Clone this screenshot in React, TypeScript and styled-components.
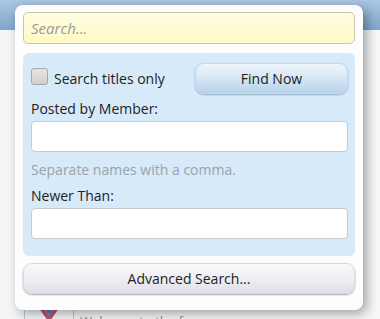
import React from 'react';
import styled, { createGlobalStyle } from 'styled-components';

const GlobalStyle = createGlobalStyle`
    html, body {
        margin: 0;
        padding: 0;
        background: #f4f6f8;
    }
    body {
        font-family: "Open Sans", "Liberation Sans", Arial, sans-serif;
    }
`;

const App = () => {
    return (
        <Page>
            <GlobalStyle />
            <HeaderBar />
            <Content>
                <Sidebar />
                <ThreadRow>
                    <Avatar>
                        <svg width="36" height="20" viewBox="0 0 36 20">
                            <path d="M4 0 L18 20 L32 0" fill="none" stroke="#c0507a" strokeWidth="4" />
                            <path d="M9 0 L18 14 L27 0" fill="none" stroke="#5a7fc0" strokeWidth="3" />
                            <path d="M13 0 L18 8 L23 0" fill="none" stroke="#7ab07a" strokeWidth="3" />
                        </svg>
                    </Avatar>
                    <ThreadTitle>Welcome to the forum</ThreadTitle>
                </ThreadRow>
            </Content>

            <Popup>
                <SearchInput placeholder="Search..." />
                <Options>
                    <TopRow>
                        <CheckLabel>
                            <CheckBox />
                            Search titles only
                        </CheckLabel>
                        <FindButton>Find Now</FindButton>
                    </TopRow>
                    <Label>Posted by Member:</Label>
                    <TextField />
                    <Hint>Separate names with a comma.</Hint>
                    <Label>Newer Than:</Label>
                    <TextField />
                </Options>
                <AdvancedButton>Advanced Search...</AdvancedButton>
            </Popup>
        </Page>
    );
};

export default App;

const Page = styled.div`
    position: relative;
    width: 380px;
    height: 319px;
    overflow: hidden;
    background: #f6f8fa;
`;

const HeaderBar = styled.div`
    height: 30px;
    background: linear-gradient(to bottom, #a9c7e1 0%, #7fa7ca 100%);
`;

const Content = styled.div`
    display: flex;
    height: 289px;
`;

const Sidebar = styled.div`
    width: 24px;
    background: #f3f5f7;
`;

const ThreadRow = styled.div`
    flex: 1;
    display: flex;
    align-items: flex-end;
    gap: 6px;
`;

const Avatar = styled.div`
    width: 50px;
    height: 20px;
    border-left: 1px solid #b8c8d8;
    border-right: 1px solid #b8c8d8;
    display: flex;
    justify-content: center;
    align-items: flex-start;
    box-sizing: border-box;
`;

const ThreadTitle = styled.div`
    font-size: 13px;
    line-height: 16px;
    color: #8090a0;
    margin-bottom: -10px;
`;

const Popup = styled.div`
    position: absolute;
    left: 15px;
    top: 5px;
    width: 348px;
    box-sizing: border-box;
    padding: 7px 8px 12px 8px;
    background: #fdfdfe;
    border-radius: 8px;
    box-shadow: 4px 4px 12px rgba(0, 0, 0, 0.35);
    display: flex;
    flex-direction: column;
`;

const SearchInput = styled.input`
    height: 32px;
    box-sizing: border-box;
    border: 1px solid #c9c6b0;
    border-radius: 5px;
    background: linear-gradient(to bottom, #fffde0 0%, #fefbc6 100%);
    padding: 0 7px;
    font-family: "Open Sans", "Liberation Sans", Arial, sans-serif;
    font-size: 15px;
    outline: none;

    &::placeholder {
        color: #9a9a9a;
        font-style: italic;
    }
`;

const Options = styled.div`
    margin-top: 9px;
    background: #d7eaf9;
    border-radius: 6px;
    padding: 10px 7px 17px 8px;
    display: flex;
    flex-direction: column;
`;

const TopRow = styled.div`
    display: flex;
    align-items: center;
    justify-content: space-between;
    margin-bottom: 6px;
`;

const CheckLabel = styled.label`
    display: flex;
    align-items: center;
    gap: 6px;
    font-size: 14px;
    line-height: 18px;
    color: #222;
`;

const CheckBox = styled.span`
    width: 15px;
    height: 15px;
    margin-top: -4px;
    border: 1px solid #a8a8a8;
    border-radius: 3px;
    background: linear-gradient(to bottom, #e4e4e4, #d0d0d0);
`;

const FindButton = styled.button`
    width: 153px;
    height: 31px;
    border: 1px solid #c6d9ea;
    border-radius: 9px;
    background: linear-gradient(to bottom, #eef5fc 0%, #d5e6f4 50%, #b6d2e9 100%);
    box-shadow: 0 1px 2px rgba(60, 90, 120, 0.45);
    font-family: "Open Sans", "Liberation Sans", Arial, sans-serif;
    font-size: 14px;
    color: #222;
`;

const Label = styled.div`
    font-size: 14px;
    line-height: 18px;
    color: #222;
    margin-bottom: 3px;
`;

const TextField = styled.div`
    height: 31px;
    box-sizing: border-box;
    background: #fff;
    border: 1px solid #c4ccd4;
    border-radius: 4px;
`;

const Hint = styled.div`
    font-size: 14px;
    line-height: 18px;
    color: #9aa3ab;
    margin: 9px 0 8px 0;
`;

const AdvancedButton = styled.button`
    margin-top: 7px;
    margin-bottom: 4px;
    height: 31px;
    border: 1px solid #d8d8e0;
    border-radius: 9px;
    background: linear-gradient(to bottom, #fafafc 0%, #ececf1 60%, #dedee6 100%);
    box-shadow: 0 1px 2px rgba(0, 0, 0, 0.35);
    font-family: "Open Sans", "Liberation Sans", Arial, sans-serif;
    font-size: 14px;
    color: #222;
`;
